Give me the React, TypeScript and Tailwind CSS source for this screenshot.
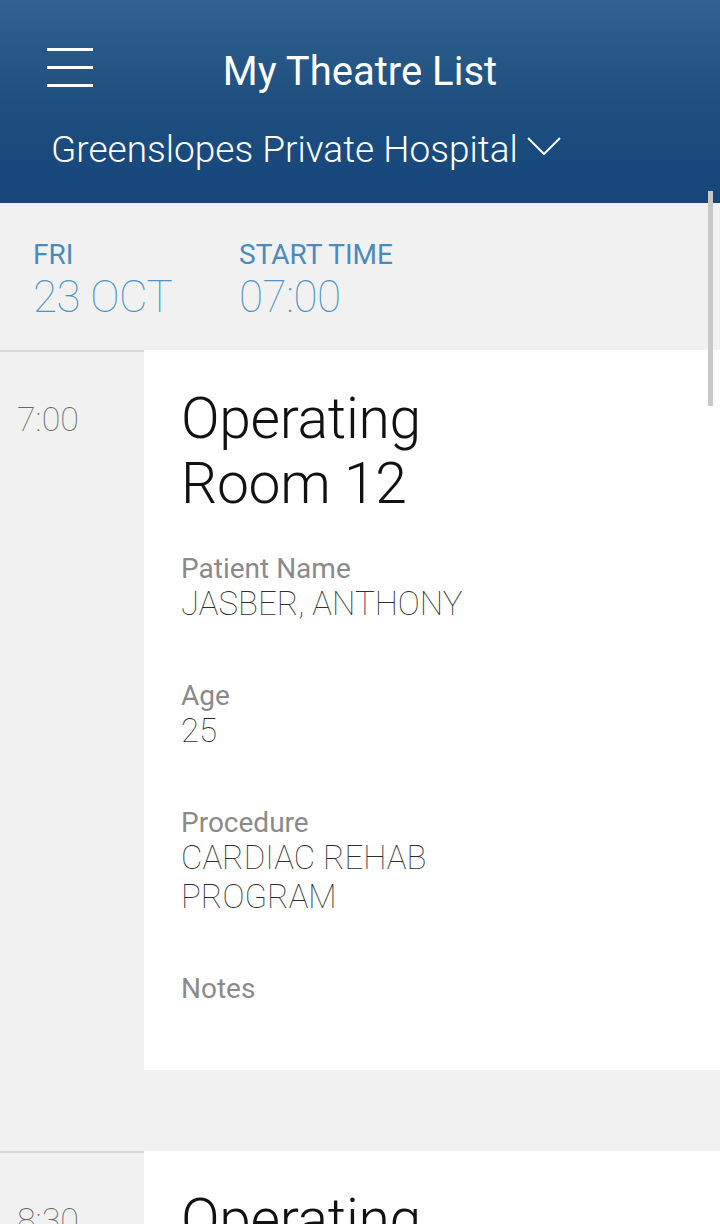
import React from "react";

type Slot = {
  time: string;
  room: string[];
  patient: string;
  age: string;
  procedure: string[];
};

const SLOTS: Slot[] = [
  {
    time: "7:00",
    room: ["Operating", "Room 12"],
    patient: "JASBER, ANTHONY",
    age: "25",
    procedure: ["CARDIAC REHAB", "PROGRAM"],
  },
  {
    time: "8:30",
    room: ["Operating", "Room 12"],
    patient: "SMITH, JOHN",
    age: "41",
    procedure: ["KNEE ARTHROSCOPY"],
  },
];

function Field({ label, lines }: { label: string; lines: string[] }) {
  return (
    <div className="mt-[58px] first:mt-0">
      <p className="text-[28px] leading-[30px] text-[#8a8a8a]">{label}</p>
      {lines.map((l) => (
        <p key={l} className="text-[33px] font-thin leading-[39px] text-[#2e2e2e]">
          {l}
        </p>
      ))}
    </div>
  );
}

function SlotCard({ slot }: { slot: Slot }) {
  return (
    <div className="flex">
      <div className="w-[144px] shrink-0 border-t-2 border-[#d8d8d8] pl-[17px] pt-[47px]">
        <p className="text-[34px] font-thin leading-[40px] text-[#666]">{slot.time}</p>
      </div>
      <div className="flex-1 bg-white pb-[66px] pl-[37px] pt-[36px]">
        <h2 className="text-[57px] font-light leading-[65px] tracking-[-0.3px] text-[#111]">
          {slot.room.map((r) => (
            <span key={r} className="block">
              {r}
            </span>
          ))}
        </h2>
        <div className="mt-[38px]">
          <Field label="Patient Name" lines={[slot.patient]} />
          <Field label="Age" lines={[slot.age]} />
          <Field label="Procedure" lines={slot.procedure} />
          <Field label="Notes" lines={[]} />
        </div>
      </div>
    </div>
  );
}

export default function App() {
  return (
    <div
      className="relative h-[1224px] w-[720px] overflow-hidden bg-[#f1f1f1]"
      style={{ fontFamily: "Roboto, 'Noto Sans', sans-serif" }}
    >
      <header className="h-[203px] bg-gradient-to-b from-[#30638f] via-[#1e4f80] to-[#16467a] pt-[52px] text-white">
        <div className="flex items-start px-[47px]">
          <button type="button" aria-label="Menu" className="mt-[-4px] flex w-[46px] flex-col gap-[15px]">
            <span className="block h-[3px] w-full bg-white" />
            <span className="block h-[3px] w-full bg-white" />
            <span className="block h-[3px] w-full bg-white" />
          </button>
          <h1 className="flex-1 text-center text-[40px] leading-[40px]">My Theatre List</h1>
          <span className="w-[46px]" />
        </div>
        <div className="mt-[39px] flex items-start pl-[51px]">
          <span className="text-[37px] font-light leading-[37px]">Greenslopes Private Hospital</span>
          <svg width="34" height="18" viewBox="0 0 34 18" className="ml-[9px] mt-[6px]" fill="none" stroke="white" strokeWidth="2">
            <path d="M1 1 L17 17 L33 1" />
          </svg>
        </div>
      </header>

      <section className="flex h-[147px] pl-[33px] pt-[35px]">
        <div className="w-[206px]">
          <p className="text-[28px] leading-[34px] text-[#4a8bbd]">FRI</p>
          <p className="text-[44px] font-thin leading-[50px] tracking-[-0.5px] text-[#4f93c6]">23 OCT</p>
        </div>
        <div>
          <p className="text-[28px] leading-[34px] text-[#4a8bbd]">START TIME</p>
          <p className="text-[44px] font-thin leading-[50px] tracking-[-0.5px] text-[#4f93c6]">07:00</p>
        </div>
      </section>

      <div className="flex flex-col gap-[81px]">
        {SLOTS.map((s) => (
          <SlotCard key={s.time} slot={s} />
        ))}
      </div>

      <div className="absolute right-[7px] top-[191px] h-[215px] w-[5px] bg-[#c8c8c8]" />
    </div>
  );
}
